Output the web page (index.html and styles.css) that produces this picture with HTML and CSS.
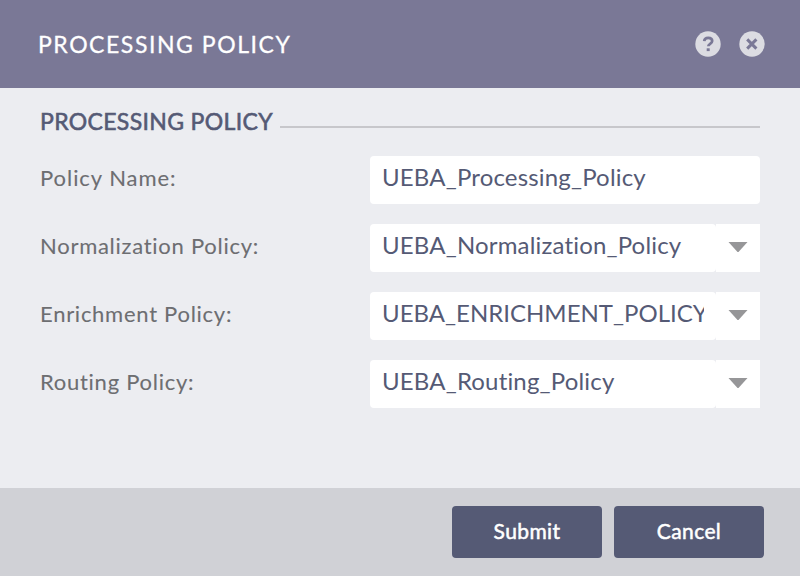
FILE: index.html
```
<!DOCTYPE html>
<html>
  <head>
    <meta charset="utf-8">
    <title>Processing Policy</title>
    <meta name="viewport" content="width=device-width,initial-scale=1">
    <link rel="stylesheet" href="styles.css">
  </head>
  <body>
    <div class="dialog">
      <div class="dialog-header">
        <h1 class="dialog-title">PROCESSING POLICY</h1>
        <div class="dialog-tools">
          <svg class="tool-icon" viewBox="0 0 26 26">
            <circle cx="13" cy="13" r="12.7" fill="#dcdce2"/>
            <path d="M9.2 10.2C9.4 7.7 11 6.8 13.2 6.8c2.4 0 4 1.1 4 3.2 0 2.9-3.9 2.8-3.9 5.3" fill="none" stroke="#7a7896" stroke-width="2.7"/>
            <rect x="11.7" y="17.3" width="3" height="2.8" fill="#7a7896"/>
          </svg>
          <svg class="tool-icon" viewBox="0 0 26 26">
            <circle cx="13" cy="13" r="12.7" fill="#dcdce2"/>
            <path d="M8.2 8.4l9.2 9.2M17.4 8.4l-9.2 9.2" fill="none" stroke="#7a7896" stroke-width="3"/>
          </svg>
        </div>
      </div>
      <form class="dialog-body">
        <div class="section">
          <h2 class="section-title">PROCESSING POLICY</h2>
          <div class="section-line"></div>
        </div>
        <div class="row">
          <label class="label label-name" for="name">Policy Name:</label>
          <div class="field">
            <input class="input" id="name" type="text" value="UEBA_Processing_Policy">
          </div>
        </div>
        <div class="row">
          <label class="label" for="normalization">Normalization Policy:</label>
          <div class="field">
            <input class="input" id="normalization" type="text" value="UEBA_Normalization_Policy">
            <div class="trigger">
              <svg class="arrow" viewBox="0 0 20 12"><path d="M.5 1h19L10.5 11h-1z"/></svg>
            </div>
          </div>
        </div>
        <div class="row">
          <label class="label" for="enrichment">Enrichment Policy:</label>
          <div class="field">
            <input class="input input-enrichment" id="enrichment" type="text" value="UEBA_ENRICHMENT_POLICY">
            <div class="trigger">
              <svg class="arrow" viewBox="0 0 20 12"><path d="M.5 1h19L10.5 11h-1z"/></svg>
            </div>
          </div>
        </div>
        <div class="row">
          <label class="label" for="routing">Routing Policy:</label>
          <div class="field">
            <input class="input" id="routing" type="text" value="UEBA_Routing_Policy">
            <div class="trigger">
              <svg class="arrow" viewBox="0 0 20 12"><path d="M.5 1h19L10.5 11h-1z"/></svg>
            </div>
          </div>
        </div>
      </form>
      <div class="dialog-footer">
        <button class="button">Submit</button>
        <button class="button">Cancel</button>
      </div>
    </div>
  </body>
</html>
```

FILE: styles.css
```
* {
  box-sizing: border-box;
}
body {
  margin: 0;
  font-family: Lato, "Liberation Sans", sans-serif;
  font-variant-ligatures: none;
}
.dialog {
  display: flex;
  flex-direction: column;
  height: 576px;
  overflow: hidden;
  background-color: #ecedf1;
}
.dialog-header {
  flex: 0 0 88px;
  display: flex;
  align-items: center;
  justify-content: space-between;
  padding: 0 35px 0 38px;
  background-color: #7a7896;
}
.dialog-title {
  margin: 0;
  padding-bottom: 1px;
  font-size: 23px;
  font-weight: 400;
  letter-spacing: 1.55px;
  -webkit-text-stroke: 0.3px;
  color: #fff;
}
.dialog-tools {
  display: flex;
  gap: 18px;
  padding-bottom: 1px;
}
.tool-icon {
  width: 26px;
  height: 26px;
}
.dialog-body {
  flex: 1;
  padding: 20px 40px 0;
}
.section {
  display: flex;
  align-items: center;
  height: 28px;
  margin-bottom: 20px;
}
.section-title {
  flex: 0 0 240px;
  margin: 0;
  padding-bottom: 2px;
  font-size: 23px;
  font-weight: 400;
  letter-spacing: 0.35px;
  -webkit-text-stroke: 0.6px;
  white-space: nowrap;
  color: #555a75;
}
.section-line {
  flex: 1;
  height: 2px;
  margin-top: 10px;
  background-color: #c7c7cb;
}
.row {
  display: flex;
  height: 48px;
  margin-bottom: 20px;
}
.label {
  flex: 0 0 330px;
  font-size: 22px;
  line-height: 44px;
  letter-spacing: 0.73px;
  -webkit-text-stroke: 0.1px;
  color: #6d6e71;
}
.label-name {
  letter-spacing: 0.95px;
}
.field {
  flex: 1;
  display: flex;
  min-width: 0;
}
.input {
  flex: 1;
  min-width: 0;
  height: 48px;
  margin: 0;
  padding: 0 12px 7px;
  border: none;
  border-radius: 4px;
  outline: none;
  background-color: #fff;
  font-family: inherit;
  font-size: 24px;
  font-variant-ligatures: none;
  letter-spacing: 0.17px;
  color: #555a75;
}
.input-enrichment {
  letter-spacing: 0;
}
.trigger {
  flex: 0 0 44px;
  display: flex;
  align-items: center;
  justify-content: center;
  padding-bottom: 3px;
  background-color: #fff;
}
.arrow {
  width: 20px;
  height: 12px;
  fill: #969698;
}
.dialog-footer {
  flex: 0 0 88px;
  display: flex;
  align-items: center;
  justify-content: flex-end;
  gap: 12px;
  padding-right: 36px;
  background-color: #d0d1d6;
}
.button {
  width: 150px;
  height: 52px;
  padding: 0 0 3px;
  border: none;
  border-radius: 4px;
  background-color: #555a75;
  font-family: inherit;
  font-size: 21px;
  font-weight: 400;
  letter-spacing: 0.4px;
  -webkit-text-stroke: 0.5px;
  color: #fff;
}
```
